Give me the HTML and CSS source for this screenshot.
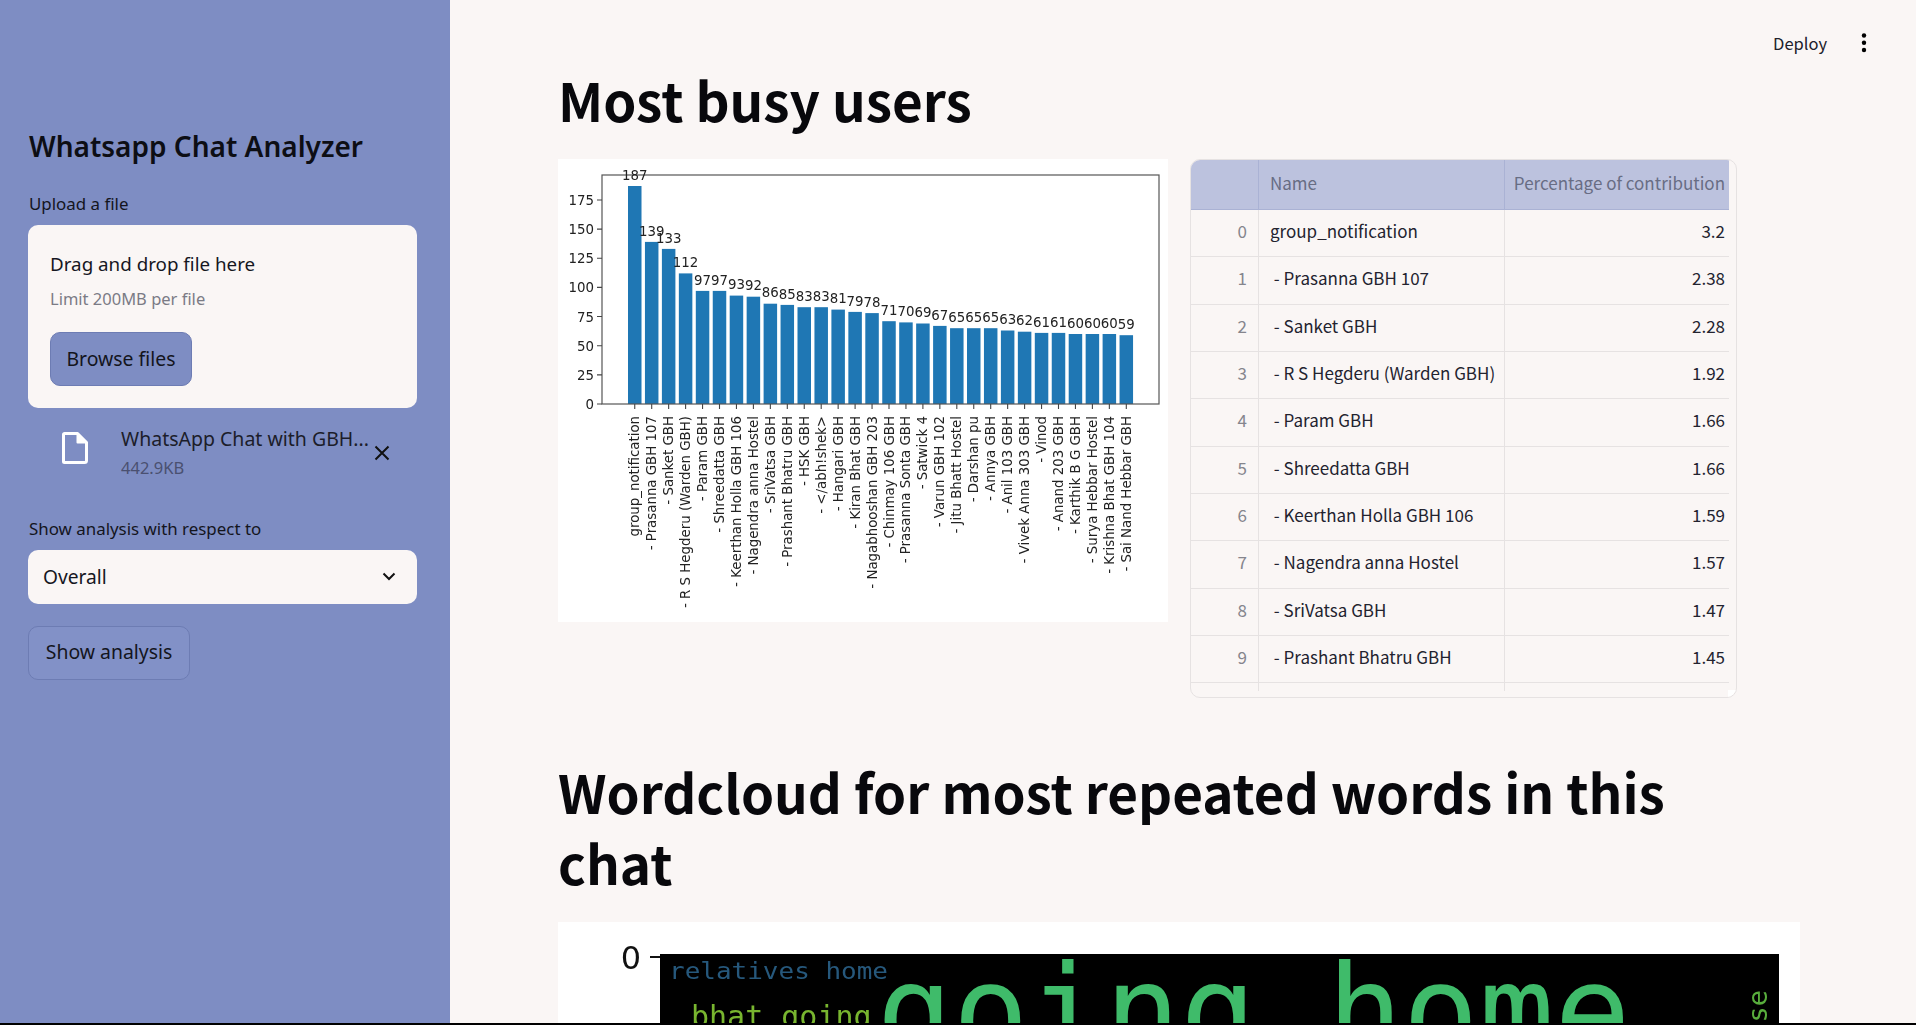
FILE: index.html
```html
<!DOCTYPE html>
<html lang="en">
<head>
<meta charset="utf-8">
<title>Whatsapp Chat Analyzer</title>
<link rel="stylesheet" href="styles.css">
</head>
<body>
<div class="app">

<aside class="sidebar">
  <h2 class="side-title">Whatsapp Chat Analyzer</h2>

  <div class="field-label upload-label">Upload a file</div>
  <div class="dropzone">
    <div class="drop-text">Drag and drop file here</div>
    <div class="drop-limit">Limit 200MB per file</div>
    <button class="btn btn-browse">Browse files</button>
  </div>

  <div class="file-row">
    <svg class="file-icon" viewBox="0 0 26 32" width="26" height="32">
      <path d="M2.5 1.5h13l9 9v18a2 2 0 0 1-2 2h-20a1 1 0 0 1-1-1v-27a1 1 0 0 1 1-1z" fill="none" stroke="#fff" stroke-width="3" stroke-linejoin="round"/>
      <path d="M15.5 1.5v9h9z" fill="#fff" stroke="#fff" stroke-width="2" stroke-linejoin="round"/>
    </svg>
    <div class="file-info">
      <div class="file-name">WhatsApp Chat with GBH...</div>
      <div class="file-size">442.9KB</div>
    </div>
    <svg class="file-remove" viewBox="0 0 16 16" width="16" height="16">
      <path d="M1.5 1.5l13 13M14.5 1.5l-13 13" stroke="#111" stroke-width="2" fill="none"/>
    </svg>
  </div>

  <div class="field-label select-label">Show analysis with respect to</div>
  <div class="select">
    <span>Overall</span>
    <svg viewBox="0 0 14 9" width="14" height="9">
      <path d="M1.5 1.5L7 7l5.5-5.5" stroke="#111" stroke-width="2" fill="none"/>
    </svg>
  </div>

  <button class="btn btn-show">Show analysis</button>
</aside>

<main class="main">
  <div class="toolbar">
    <span class="deploy">Deploy</span>
    <svg viewBox="0 0 6 20" width="6" height="20">
      <circle cx="3" cy="2.5" r="2.2"/><circle cx="3" cy="9.7" r="2.2"/><circle cx="3" cy="17" r="2.2"/>
    </svg>
  </div>

  <h1 class="heading">Most busy users</h1>

  <div class="columns">
    <div class="chart-box">
      <svg class="chart" viewBox="0 0 610 463" width="610" height="463">
        <g class="bars">
          <rect x="70" y="27" width="13.5" height="218"/>
          <rect x="86.95" y="82.9" width="13.5" height="162.1"/>
          <rect x="103.9" y="89.9" width="13.5" height="155.1"/>
          <rect x="120.85" y="114.4" width="13.5" height="130.6"/>
          <rect x="137.8" y="131.9" width="13.5" height="113.1"/>
          <rect x="154.75" y="131.9" width="13.5" height="113.1"/>
          <rect x="171.7" y="136.6" width="13.5" height="108.4"/>
          <rect x="188.65" y="137.7" width="13.5" height="107.3"/>
          <rect x="205.6" y="144.7" width="13.5" height="100.3"/>
          <rect x="222.55" y="145.9" width="13.5" height="99.1"/>
          <rect x="239.5" y="148.2" width="13.5" height="96.8"/>
          <rect x="256.45" y="148.2" width="13.5" height="96.8"/>
          <rect x="273.4" y="150.6" width="13.5" height="94.4"/>
          <rect x="290.35" y="152.9" width="13.5" height="92.1"/>
          <rect x="307.3" y="154.1" width="13.5" height="90.9"/>
          <rect x="324.25" y="162.2" width="13.5" height="82.8"/>
          <rect x="341.2" y="163.4" width="13.5" height="81.6"/>
          <rect x="358.15" y="164.5" width="13.5" height="80.5"/>
          <rect x="375.1" y="166.9" width="13.5" height="78.1"/>
          <rect x="392.05" y="169.2" width="13.5" height="75.8"/>
          <rect x="409" y="169.2" width="13.5" height="75.8"/>
          <rect x="425.95" y="169.2" width="13.5" height="75.8"/>
          <rect x="442.9" y="171.5" width="13.5" height="73.5"/>
          <rect x="459.85" y="172.7" width="13.5" height="72.3"/>
          <rect x="476.8" y="173.9" width="13.5" height="71.1"/>
          <rect x="493.75" y="173.9" width="13.5" height="71.1"/>
          <rect x="510.7" y="175" width="13.5" height="70"/>
          <rect x="527.65" y="175" width="13.5" height="70"/>
          <rect x="544.6" y="175" width="13.5" height="70"/>
          <rect x="561.55" y="176.2" width="13.5" height="68.8"/>
        </g>
        <rect class="frame" x="44" y="16" width="557" height="229"/>
        <path class="ticks" d="M39 245h5M39 215.85h5M39 186.7h5M39 157.55h5M39 128.4h5M39 99.25h5M39 70.1h5M39 41h5
          M76.75 245v5M93.7 245v5M110.65 245v5M127.6 245v5M144.55 245v5M161.5 245v5M178.45 245v5M195.4 245v5M212.35 245v5M229.3 245v5
          M246.25 245v5M263.2 245v5M280.15 245v5M297.1 245v5M314.05 245v5M331 245v5M347.95 245v5M364.9 245v5M381.85 245v5M398.8 245v5
          M415.75 245v5M432.7 245v5M449.65 245v5M466.6 245v5M483.55 245v5M500.5 245v5M517.45 245v5M534.4 245v5M551.35 245v5M568.3 245v5"/>
        <g class="y-labels">
          <text x="36" y="250">0</text>
          <text x="36" y="220.8">25</text>
          <text x="36" y="191.7">50</text>
          <text x="36" y="162.5">75</text>
          <text x="36" y="133.4">100</text>
          <text x="36" y="104.2">125</text>
          <text x="36" y="75.1">150</text>
          <text x="36" y="46">175</text>
        </g>
        <g class="values">
          <text x="76.75" y="20.6">187</text>
          <text x="93.7" y="76.5">139</text>
          <text x="110.65" y="83.5">133</text>
          <text x="127.6" y="108">112</text>
          <text x="144.55" y="125.5">97</text>
          <text x="161.5" y="125.5">97</text>
          <text x="178.45" y="130.2">93</text>
          <text x="195.4" y="131.3">92</text>
          <text x="212.35" y="138.3">86</text>
          <text x="229.3" y="139.5">85</text>
          <text x="246.25" y="141.8">83</text>
          <text x="263.2" y="141.8">83</text>
          <text x="280.15" y="144.2">81</text>
          <text x="297.1" y="146.5">79</text>
          <text x="314.05" y="147.7">78</text>
          <text x="331" y="155.8">71</text>
          <text x="347.95" y="157">70</text>
          <text x="364.9" y="158.1">69</text>
          <text x="381.85" y="160.5">67</text>
          <text x="398.8" y="162.8">65</text>
          <text x="415.75" y="162.8">65</text>
          <text x="432.7" y="162.8">65</text>
          <text x="449.65" y="165.1">63</text>
          <text x="466.6" y="166.3">62</text>
          <text x="483.55" y="167.5">61</text>
          <text x="500.5" y="167.5">61</text>
          <text x="517.45" y="168.6">60</text>
          <text x="534.4" y="168.6">60</text>
          <text x="551.35" y="168.6">60</text>
          <text x="568.3" y="169.8">59</text>
        </g>
        <g class="x-labels">
          <text transform="translate(81.2 257) rotate(-90)">group_notification</text>
          <text transform="translate(98.2 257) rotate(-90)">- Prasanna GBH 107</text>
          <text transform="translate(115.1 257) rotate(-90)">- Sanket GBH</text>
          <text transform="translate(132.1 257) rotate(-90)">- R S Hegderu (Warden GBH)</text>
          <text transform="translate(149 257) rotate(-90)">- Param GBH</text>
          <text transform="translate(166 257) rotate(-90)">- Shreedatta GBH</text>
          <text transform="translate(182.9 257) rotate(-90)">- Keerthan Holla GBH 106</text>
          <text transform="translate(199.9 257) rotate(-90)">- Nagendra anna Hostel</text>
          <text transform="translate(216.8 257) rotate(-90)">- SriVatsa GBH</text>
          <text transform="translate(233.8 257) rotate(-90)">- Prashant Bhatru GBH</text>
          <text transform="translate(250.7 257) rotate(-90)">- HSK GBH</text>
          <text transform="translate(267.7 257) rotate(-90)">- &lt;/abh!shek&gt;</text>
          <text transform="translate(284.6 257) rotate(-90)">- Hangari GBH</text>
          <text transform="translate(301.6 257) rotate(-90)">- Kiran Bhat GBH</text>
          <text transform="translate(318.5 257) rotate(-90)">- Nagabhooshan GBH 203</text>
          <text transform="translate(335.5 257) rotate(-90)">- Chinmay 106 GBH</text>
          <text transform="translate(352.4 257) rotate(-90)">- Prasanna Sonta GBH</text>
          <text transform="translate(369.4 257) rotate(-90)">- Satwick 4</text>
          <text transform="translate(386.3 257) rotate(-90)">- Varun GBH 102</text>
          <text transform="translate(403.3 257) rotate(-90)">- Jitu Bhatt Hostel</text>
          <text transform="translate(420.2 257) rotate(-90)">- Darshan pu</text>
          <text transform="translate(437.2 257) rotate(-90)">- Annya GBH</text>
          <text transform="translate(454.1 257) rotate(-90)">- Anil 103 GBH</text>
          <text transform="translate(471.1 257) rotate(-90)">- Vivek Anna 303 GBH</text>
          <text transform="translate(488 257) rotate(-90)">- Vinod</text>
          <text transform="translate(505 257) rotate(-90)">- Anand 203 GBH</text>
          <text transform="translate(521.9 257) rotate(-90)">- Karthik B G GBH</text>
          <text transform="translate(538.9 257) rotate(-90)">- Surya Hebbar Hostel</text>
          <text transform="translate(555.8 257) rotate(-90)">- Krishna Bhat GBH 104</text>
          <text transform="translate(572.8 257) rotate(-90)">- Sai Nand Hebbar GBH</text>
        </g>
      </svg>
    </div>

    <div class="table-wrap">
      <div class="table">
        <div class="row head"><div class="cell idx"></div><div class="cell name">Name</div><div class="cell pct">Percentage of contribution</div></div>
        <div class="row"><div class="cell idx">0</div><div class="cell name">group_notification</div><div class="cell pct">3.2</div></div>
        <div class="row"><div class="cell idx">1</div><div class="cell name"> - Prasanna GBH 107</div><div class="cell pct">2.38</div></div>
        <div class="row"><div class="cell idx">2</div><div class="cell name"> - Sanket GBH</div><div class="cell pct">2.28</div></div>
        <div class="row"><div class="cell idx">3</div><div class="cell name"> - R S Hegderu (Warden GBH)</div><div class="cell pct">1.92</div></div>
        <div class="row"><div class="cell idx">4</div><div class="cell name"> - Param GBH</div><div class="cell pct">1.66</div></div>
        <div class="row"><div class="cell idx">5</div><div class="cell name"> - Shreedatta GBH</div><div class="cell pct">1.66</div></div>
        <div class="row"><div class="cell idx">6</div><div class="cell name"> - Keerthan Holla GBH 106</div><div class="cell pct">1.59</div></div>
        <div class="row"><div class="cell idx">7</div><div class="cell name"> - Nagendra anna Hostel</div><div class="cell pct">1.57</div></div>
        <div class="row"><div class="cell idx">8</div><div class="cell name"> - SriVatsa GBH</div><div class="cell pct">1.47</div></div>
        <div class="row"><div class="cell idx">9</div><div class="cell name"> - Prashant Bhatru GBH</div><div class="cell pct">1.45</div></div>
        <div class="row"><div class="cell idx"></div><div class="cell name"></div><div class="cell pct"></div></div>
      </div>
      <div class="table-corner"></div>
    </div>
  </div>

  <h1 class="heading heading-cloud">Wordcloud for most repeated words in this chat</h1>

  <div class="cloud-box">
    <svg class="cloud" viewBox="0 0 1242 150" width="1242" height="150">
      <text class="cloud-tick" x="83" y="47">0</text>
      <rect x="92" y="34" width="10" height="2" fill="#111"/>
      <rect x="102" y="32" width="1119" height="118" fill="#000"/>
      <text class="word word-sm" transform="translate(111 57) scale(1 .85)" fill="#26587c">relatives home</text>
      <text class="word word-md" x="133" y="105" fill="#78b52f">bhat going</text>
      <text class="word word-lg" x="319" y="133" fill="#3fbb6a">going</text>
      <text class="word word-lg" x="769" y="133" fill="#3fbb6a">home</text>
      <text class="word word-side" transform="translate(1209 68) rotate(-90)" fill="#58ad3c">use</text>
    </svg>
  </div>
</main>

</div>
</body>
</html>
```

FILE: styles.css
```css
* {box-sizing: border-box;}
html, body {margin: 0; height: 100%; overflow: hidden;}
body {background: #000; color: #16171f; font-family: "Noto Sans", sans-serif;}

.app {display: flex; height: 1023px; overflow: hidden; background: #faf6f5;}

/* sidebar */
.sidebar {width: 450px; flex: none; background: #7e8dc3; padding: 126px 33px 0 28px;}
.side-title {margin: 0 0 0 1px; font-size: 28px; line-height: 40px; font-weight: 600; color: #0d0e14;}
.field-label {margin-left: 1px; font-size: 16.9px; line-height: 24px; color: #14151d;}
.upload-label {margin-top: 26px;}
.select-label {margin-top: 37px;}

.dropzone {height: 183px; margin-top: 9px; padding: 25px 22px 0; background: #faf6f5; border-radius: 10px;}
.drop-text {font-size: 18.8px; line-height: 28px;}
.drop-limit {margin-top: 9px; font-size: 16.5px; line-height: 24px; color: #7b7b85;}

.btn {display: block; font-family: inherit; font-size: 19.4px; color: #14151d; background: #7e8dc3; border: 1px solid #6d7cb3; border-radius: 10px;}
.btn-browse {width: 142px; height: 54px; margin-top: 21px; padding-bottom: 3px;}
.btn-show {width: 162px; height: 54px; margin-top: 22px; padding-bottom: 5px; background: #8291c7;}

.file-row {display: flex; align-items: flex-start; padding: 24px 0 0 34px;}
.file-icon {flex: none;}
.file-info {width: 252px; margin-left: 33px; margin-top: -7px; white-space: nowrap; overflow: hidden;}
.file-name {font-size: 19.5px; line-height: 28px; color: #1c1d2a;}
.file-size {margin-top: 3px; font-size: 16.5px; line-height: 24px; color: #4a5070;}
.file-remove {flex: none; margin: 13px 0 0 1px;}

.select {display: flex; align-items: center; justify-content: space-between; height: 54px; margin-top: 9px; padding: 0 21px 1px 15px; background: #faf6f5; border-radius: 10px; font-size: 19.2px;}

/* main column */
.main {position: relative; flex: 1; min-width: 0; padding: 64px 116px 0 108px; font-family: "Noto Sans CJK JP", "Noto Sans", sans-serif;}
.toolbar {position: absolute; top: 29px; right: 49px; display: flex; align-items: center; gap: 34px;}
.deploy {font-size: 16.5px; line-height: 28px; color: #20212b;}
.heading {margin: 0; font-size: 53px; line-height: 71px; font-weight: 700; color: #08080c;}

.columns {display: flex; gap: 22px; margin-top: 24px;}
.chart-box {width: 610px; height: 463px; background: #fff;}
.chart {display: block; filter: blur(.35px);}
.bars {fill: #1f77b4;}
.frame {fill: none; stroke: #555; stroke-width: 1.2;}
.ticks {fill: none; stroke: #444; stroke-width: 1.1;}
.chart text {font-family: "DejaVu Sans", sans-serif; font-size: 13.35px; fill: #222;}
.y-labels {text-anchor: end;}
.values {text-anchor: middle;}
.x-labels {text-anchor: end;}

.table-wrap {position: relative; width: 547px; height: 539px; border: 1px solid #e6e2e2; border-radius: 10px; overflow: hidden;}
.table {width: 538px; height: 531px; overflow: hidden; font-size: 17px;}
.row {display: flex; height: 47.33px; white-space: pre;}
.cell {display: flex; align-items: center; padding-bottom: 5px; border-right: 1px solid #e6e2e2; border-bottom: 1px solid #e6e2e2; color: #23232f;}
.cell.idx {width: 68px; justify-content: flex-end; padding-right: 11px; color: #85858d;}
.cell.name {width: 246px; padding-left: 11px;}
.cell.pct {width: 224px; justify-content: flex-end; padding-right: 4px; border-right: 0;}
.row.head {height: 50px;}
.head .cell {background: #bcc2de; border-color: #aab2d4; color: #686d84;}
.table-corner {position: absolute; right: 0; bottom: 0; width: 8px; height: 7px; background: #fff;}

.heading-cloud {max-width: 1150px; margin-top: 58px;}
.cloud-box {width: 1242px; height: 150px; margin-top: 24px; background: #fff;}
.cloud {display: block; filter: blur(.4px);}
.cloud-tick {font-family: "DejaVu Sans", sans-serif; font-size: 32px; text-anchor: end; fill: #111;}
.word {font-family: "DejaVu Sans Mono", monospace;}
.word-sm {font-size: 26px;}
.word-md {font-size: 30px;}
.word-lg {font-size: 126px;}
.word-side {font-size: 27px; text-anchor: end;}
```
